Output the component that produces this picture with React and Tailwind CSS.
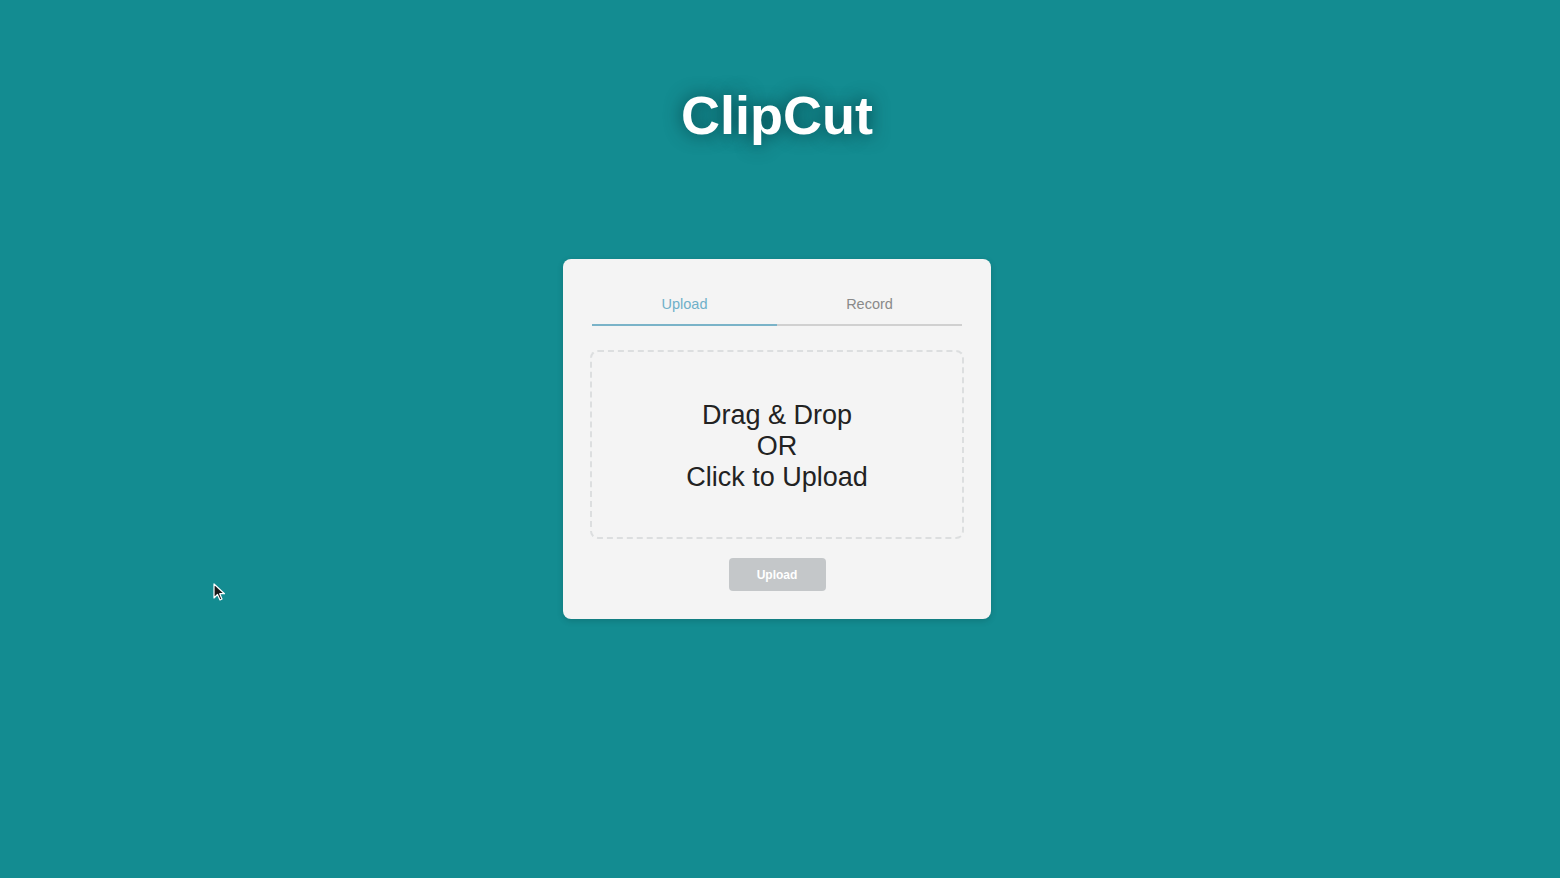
import React, { useState } from "react";

export default function App() {
  const [tab, setTab] = useState("upload");

  return (
    <div className="relative min-h-screen w-full bg-[#138c91] font-['Liberation_Sans',Arial,sans-serif] flex flex-col items-center pr-[6px]">
      <h1 className="pt-[88px] text-[54px] leading-[54px] font-bold text-white [text-shadow:0_0_18px_rgba(0,40,45,0.75)]">
        ClipCut
      </h1>

      <div className="mt-[117px] w-[428px] bg-[#f4f4f4] rounded-[8px] shadow-[0_2px_6px_rgba(0,0,0,0.15)] px-[27px] pt-[28px] pb-[28px] flex flex-col items-center">
        <div className="w-full px-[2px] flex">
          <button
            onClick={() => setTab("upload")}
            className={`flex-1 pt-[9px] pb-[11px] text-[14.5px] leading-[17px] border-b-2 ${
              tab === "upload"
                ? "text-[#6fb0c9] border-[#7ab3c8]"
                : "text-[#8a8a8a] border-[#d0d0d0]"
            }`}
          >
            Upload
          </button>
          <button
            onClick={() => setTab("record")}
            className={`flex-1 pt-[9px] pb-[11px] text-[14.5px] leading-[17px] border-b-2 ${
              tab === "record"
                ? "text-[#6fb0c9] border-[#7ab3c8]"
                : "text-[#8a8a8a] border-[#d0d0d0]"
            }`}
          >
            Record
          </button>
        </div>

        <div className="mt-[24px] w-full h-[189px] border-2 border-dashed border-[#dcdedf] rounded-[8px] flex items-center justify-center cursor-pointer">
          <p className="mt-[3px] text-center text-[27px] leading-[31px] text-[#222]">
            Drag &amp; Drop
            <br />
            OR
            <br />
            Click to Upload
          </p>
        </div>

        <button
          disabled
          className="mt-[19px] w-[97px] h-[33px] rounded-[4px] bg-[#c4c7c9] text-white text-[12px] font-bold"
        >
          Upload
        </button>
      </div>

      {/* mouse pointer captured in the screenshot */}
      <svg
        className="absolute left-[213px] top-[583px]"
        width="14"
        height="19"
        viewBox="0 0 14 19"
      >
        <path
          d="M1 1 L1 15 L4.5 11.5 L7 17 L9 16 L6.7 10.7 L11.5 10.7 Z"
          fill="#1a1a1a"
          stroke="#ffffff"
          strokeWidth="1.2"
          strokeLinejoin="round"
        />
      </svg>
    </div>
  );
}
